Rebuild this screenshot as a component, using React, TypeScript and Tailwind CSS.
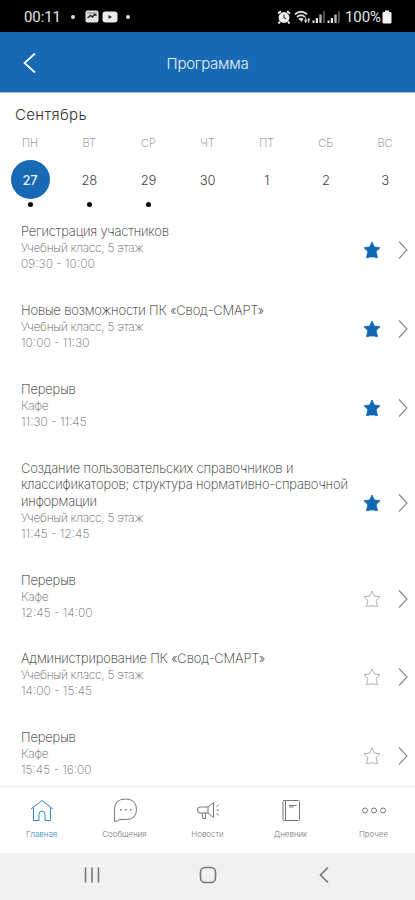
import React from 'react';

interface Day {
  name: string;
  date: number;
  hasEvents?: boolean;
}

interface ProgramItem {
  title: string[];
  place: string;
  time: string;
  starred?: boolean;
}

const days: Day[] = [
  { name: 'ПН', date: 27, hasEvents: true },
  { name: 'ВТ', date: 28, hasEvents: true },
  { name: 'СР', date: 29, hasEvents: true },
  { name: 'ЧТ', date: 30 },
  { name: 'ПТ', date: 1 },
  { name: 'СБ', date: 2 },
  { name: 'ВС', date: 3 },
];

const program: ProgramItem[] = [
  { title: ['Регистрация участников'], place: 'Учебный класс, 5 этаж', time: '09:30 - 10:00', starred: true },
  { title: ['Новые возможности ПК «Свод-СМАРТ»'], place: 'Учебный класс, 5 этаж', time: '10:00 - 11:30', starred: true },
  { title: ['Перерыв'], place: 'Кафе', time: '11:30 - 11:45', starred: true },
  {
    title: [
      'Создание пользовательских справочников и',
      'классификаторов; структура нормативно-справочной',
      'информации',
    ],
    place: 'Учебный класс, 5 этаж',
    time: '11:45 - 12:45',
    starred: true,
  },
  { title: ['Перерыв'], place: 'Кафе', time: '12:45 - 14:00' },
  { title: ['Администрирование ПК «Свод-СМАРТ»'], place: 'Учебный класс, 5 этаж', time: '14:00 - 15:45' },
  { title: ['Перерыв'], place: 'Кафе', time: '15:45 - 16:00' },
];

const SignalIcon = () => (
  <svg width="14" height="13" viewBox="0 0 14 13">
    <path d="M0.5 10.500h2V13h-2zM3.800 8h2.200v5H3.800z" fill="#e8e8e8" />
    <path d="M7.300 4.500h2.400V13H7.300z" fill="#b5b5b5" />
    <path d="M11 1h1.800v12H11z" fill="#555" />
  </svg>
);

const StatusBar = () => (
  <div className="flex h-8 shrink-0 items-center justify-between bg-black pl-[24px] pr-[23px] font-['Roboto',sans-serif] text-[#e6e6e6]">
    <div className="flex items-center pt-px">
      <span className="w-[37px] text-[15px] leading-8 tracking-[-0.1px]">00:11</span>
      <span className="ml-[10px] size-1 rounded-full bg-[#ddd]" />
      <svg className="ml-[10px]" width="14" height="13" viewBox="0 0 14 13">
        <rect x="0.5" y="0.5" width="13" height="12" rx="2" fill="#e4e4e4" />
        <path d="M2 3h10" stroke="#777" />
        <path d="M2.500 8l3-2.500 2 1.500 2-2.500 2 1" stroke="#222" strokeWidth="1.4" fill="none" />
      </svg>
      <svg className="ml-[3px]" width="16" height="12" viewBox="0 0 16 12">
        <rect x="0.5" y="0.5" width="15" height="11" rx="3" fill="#ececec" />
        <path d="M6.500 4l3.500 2-3.500 2z" fill="#222" />
      </svg>
      <span className="ml-[8px] size-1 rounded-full bg-[#ddd]" />
    </div>
    <div className="flex items-center pt-px">
      <svg width="14" height="14" viewBox="0 0 14 14">
        <circle cx="7" cy="7.500" r="5.400" fill="#ececec" />
        <path d="M1 3.500l3-2.300M13 3.500l-3-2.300M3 11.500l-1.500 2M11 11.500l1.500 2" stroke="#ececec" strokeWidth="2" />
        <path d="M7 4.500v3.300l2 1" stroke="#333" strokeWidth="1.100" fill="none" />
      </svg>
      <svg className="ml-[3px]" width="17" height="14" viewBox="0 0 17 14">
        <path d="M1 4.300q6-5 12 0M3 7q4-3.300 8 0M5 9.500q2-1.700 4 0" stroke="#dcdcdc" strokeWidth="1.900" fill="none" />
        <path d="M6 10h3l-1.500 2z" fill="#dcdcdc" />
        <path d="M11.700 7.500v5M14.700 8.500v4" stroke="#dcdcdc" strokeWidth="1.200" />
        <path d="M10 10.300h3.400l-1.700 2.700zM13.200 10.300h3l-1.500-2.300z" fill="#dcdcdc" />
      </svg>
      <span className="ml-px"><SignalIcon /></span>
      <span className="ml-px"><SignalIcon /></span>
      <span className="ml-[4px] w-[37px] whitespace-nowrap text-[15px] leading-8 tracking-[-0.1px]">100%</span>
      <svg width="10" height="14" viewBox="0 0 10 14">
        <path d="M3 0.500h4V2h1.500Q9.500 2 9.500 3v9.500q0 1-1 1h-7q-1 0-1-1V3q0-1 1-1H3z" fill="#f5f5f5" />
      </svg>
    </div>
  </div>
);

const Header = () => (
  <header className="grid h-[61px] shrink-0 grid-cols-[1fr_auto_1fr] items-center border-b border-[#a9c5df] bg-[#1769b3]">
    <svg className="mt-[2px] ml-[22px]" width="16" height="22" viewBox="0 0 16 22">
      <path d="M13 1.500L2.500 11 13 20.500" stroke="#fff" strokeWidth="1.700" fill="none" />
    </svg>
    <h1 className="mt-[4px] text-[15px] font-light tracking-[-0.25px] text-[#e8f0f8]">Программа</h1>
    <span />
  </header>
);

const Calendar = () => (
  <section className="h-[117px] shrink-0">
    <h2 className="pl-[15px] pt-[12px] text-[15px] leading-5 font-light tracking-[0.35px] text-[#333]">Сентябрь</h2>
    <div className="flex justify-between px-[6px] pt-[10px]">
      {days.map((day, index) => (
        <div key={day.name} className="flex w-12 flex-col items-center">
          <span className="text-[11px] leading-4 font-extralight text-[#777]">{day.name}</span>
          <span
            className={
              index === 0
                ? 'mt-[9px] flex size-[39px] items-center justify-center rounded-full bg-[#1769b3] pt-[2px] text-[13px] font-medium tracking-[-0.3px] text-[#e8f0f8]'
                : 'mt-[9px] flex size-[39px] items-center justify-center pt-[2px] text-[13px] font-light tracking-[-0.3px] text-[#444]'
            }
          >
            {day.date}
          </span>
          {day.hasEvents && <span className="mt-[3px] size-[5px] rounded-full bg-black" />}
        </div>
      ))}
    </div>
  </section>
);

const Star = ({ filled }: { filled?: boolean }) => (
  <svg className="mt-px" width="18" height="18" viewBox="0 0 18 18">
    <path
      d="M9 1l2.300 5 5.700 0.700-3.900 3.800 1.400 6-1.900 0.200L11.500 16h-5l-1.100 0.700-1.900-0.200 1.400-6L1 6.700 6.700 6z"
      fill={filled ? '#1267b5' : 'none'}
      stroke={filled ? '#1267b5' : '#999'}
      strokeWidth="0.800"
      strokeLinejoin="round"
    />
  </svg>
);

const ProgramRow = ({ item }: { item: ProgramItem }) => (
  <li className="flex shrink-0 items-center">
    <div className="grow pb-[16.9px] pl-[21px] pt-[13px] whitespace-nowrap">
      <h3 className="text-[13px] leading-[16.5px] font-extralight tracking-[-0.16px] text-[#222]">
        {item.title.map((line) => (
          <span key={line} className="block">{line}</span>
        ))}
      </h3>
      <p className="pt-[0.5px] text-[12px] leading-4 font-extralight tracking-[-0.3px] text-[#666]">{item.place}</p>
      <p className="text-[12px] leading-4 font-extralight text-[#666]">{item.time}</p>
    </div>
    <Star filled={item.starred} />
    <svg className="mt-px ml-[16px] mr-[6px]" width="12" height="18" viewBox="0 0 12 18">
      <path d="M2 0.500L10 9 2 17.500" stroke="#888" strokeWidth="1.100" fill="none" />
    </svg>
  </li>
);

const tabs = [
  {
    label: 'Главная',
    icon: <path d="M2 11L13 2.500l11 8.500M4.500 9.500V22.500h5.500V16.500q0-3.500 3-3.500t3 3.500v6h5.500V9.500" />,
  },
  {
    label: 'Сообщения',
    icon: (
      <>
        <path d="M2.500 23.500V11.500Q2.500 1 13.500 1T24.500 11.500 13.500 21.500H7.500Q5.500 23.500 2.500 23.500z" />
        <path d="M8 11.800h1.500M13 11.800h1.500M18 11.800h1.500" strokeWidth="1.600" />
      </>
    ),
  },
  {
    label: 'Новости',
    icon: (
      <path d="M13 9H5q-2.500 0-2.500 3T5 15h8l5.500 4.500V4.500zM13 9v6M7 15l1 5.500h2.500v-5.500M21.500 12H24M21.500 8.500L23.500 7M21.500 15.500L23.500 17" />
    ),
  },
  {
    label: 'Дневник',
    icon: (
      <>
        <rect x="5" y="2.500" width="16.500" height="20" rx="1" />
        <path d="M7.500 2.500v20M11 7.500h7.500M11 9h4.500" />
      </>
    ),
  },
  {
    label: 'Прочее',
    icon: (
      <>
        <circle cx="4" cy="12.500" r="2.500" />
        <circle cx="13" cy="12.500" r="2.500" />
        <circle cx="22" cy="12.500" r="2.500" />
      </>
    ),
  },
];

const TabBar = () => (
  <nav className="grid h-[67px] shrink-0 grid-cols-5 border-t border-[#eee] bg-white">
    {tabs.map((tab, index) => (
      <div
        key={tab.label}
        className={index === 0 ? 'flex flex-col items-center pt-[11px] text-[#3484c9]' : 'flex flex-col items-center pt-[11px] text-[#777]'}
      >
        <svg width="26" height="26" viewBox="0 0 26 26" fill="none" stroke="currentColor" strokeWidth="1">
          {tab.icon}
        </svg>
        <span className="mt-[4px] text-[8px] leading-3 font-light tracking-[-0.05px]">{tab.label}</span>
      </div>
    ))}
  </nav>
);

const SystemNav = () => (
  <div className="flex h-[47px] shrink-0 items-center justify-between bg-[#f1f1f1] pb-[3px] pl-[83px] pr-[82px]">
    <svg width="18" height="18" viewBox="0 0 18 18" stroke="#777" strokeWidth="1.600">
      <path d="M2.500 1.500v15M9 1.500v15M15.500 1.500v15" />
    </svg>
    <svg width="18" height="18" viewBox="0 0 18 18">
      <rect x="1.500" y="1.500" width="15" height="15" rx="4.500" fill="none" stroke="#777" strokeWidth="1.600" />
    </svg>
    <svg width="18" height="18" viewBox="0 0 18 18">
      <path d="M13 1.500L5.500 9l7.500 7.500" fill="none" stroke="#777" strokeWidth="1.600" />
    </svg>
  </div>
);

export default function App() {
  return (
    <div className="flex h-[900px] w-[415px] flex-col overflow-hidden bg-white font-['Inter',sans-serif]">
      <StatusBar />
      <Header />
      <Calendar />
      <ul className="flex min-h-0 grow flex-col overflow-hidden">
        {program.map((item) => (
          <ProgramRow key={item.time} item={item} />
        ))}
      </ul>
      <TabBar />
      <SystemNav />
    </div>
  );
}
